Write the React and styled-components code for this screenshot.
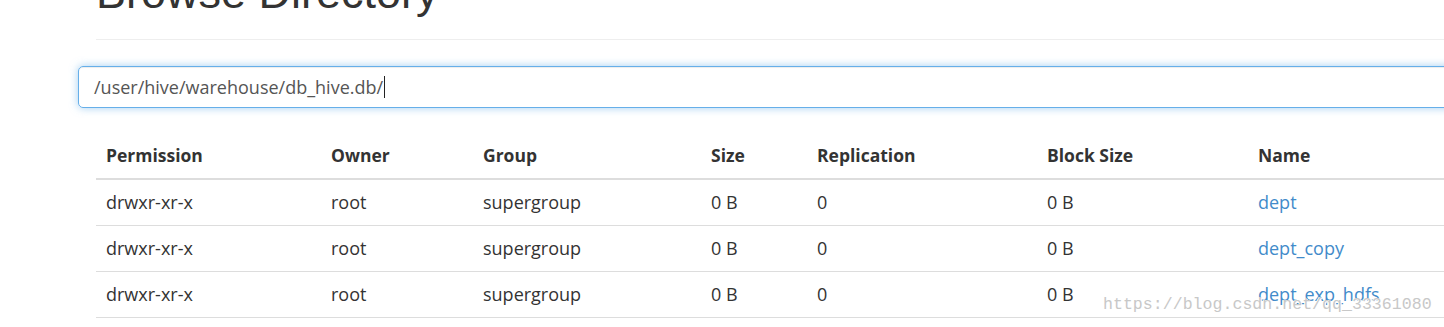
import React from 'react';
import styled, { createGlobalStyle } from 'styled-components';

const GlobalStyle = createGlobalStyle`
    html, body {
        margin: 0;
        padding: 0;
        background: #fff;
        overflow: hidden;
    }
    body {
        color: #333;
        font-family: "Open Sans", "Noto Sans", sans-serif;
    }
`

const Page = styled.div`
    position: relative;
    width: 1600px;
    height: 327px;
    padding-left: 78px;
    box-sizing: border-box;
`

const PageHeader = styled.div`
    margin-left: 18px;
    height: 39px;
    display: flex;
    align-items: flex-end;
    border-bottom: 1px solid #eee;
`

const Title = styled.h1`
    margin: 0;
    padding-bottom: 24px;
    font-family: "Liberation Sans", Arial, sans-serif;
    font-size: 45px;
    font-weight: 500;
    line-height: 45px;
    color: #333;
`

const PathBox = styled.div`
    margin-top: 26px;
    height: 42px;
    box-sizing: border-box;
    padding: 0 15px;
    display: flex;
    align-items: center;
    border: 1px solid #66afe9;
    border-radius: 5px;
    box-shadow: inset 0 1px 1px rgba(0,0,0,.075), 0 0 8px rgba(102,175,233,.6);
    font-size: 18px;
    color: #555;
`

const Caret = styled.span`
    display: inline-block;
    width: 1px;
    height: 22px;
    margin-left: 1px;
    background: #222;
`

const Table = styled.table`
    margin-left: 18px;
    margin-top: 25px;
    width: 1504px;
    border-collapse: collapse;
    table-layout: fixed;
    font-size: 18px;
    line-height: 25px;
`

const Th = styled.th`
    box-sizing: border-box;
    text-align: left;
    padding: 10px;
    font-size: 17.5px;
    font-weight: 700;
    border-bottom: 2px solid #ddd;
    width: ${p => p.$w ? p.$w + 'px' : 'auto'};
`

const Td = styled.td`
    padding: 10px;
    border-bottom: 1px solid #ddd;
    white-space: nowrap;
`

const Link = styled.a`
    color: #428bca;
    text-decoration: none;
`

const Watermark = styled.div`
    position: absolute;
    left: 1103px;
    top: 295px;
    font-family: "Liberation Mono", "DejaVu Sans Mono", monospace;
    font-size: 16.6px;
    line-height: 20px;
    color: #c8c8c8;
    text-shadow: 1px 1px 0 #fff, -1px 0 0 #fff;
    white-space: nowrap;
`

const columns = [
    { title: 'Permission', w: 225 },
    { title: 'Owner', w: 152 },
    { title: 'Group', w: 228 },
    { title: 'Size', w: 106 },
    { title: 'Replication', w: 230 },
    { title: 'Block Size', w: 211 },
    { title: 'Name' },
];

const files = ['dept', 'dept_copy', 'dept_exp_hdfs'];

export default function App() {
    return (
        <Page>
            <GlobalStyle />
            <PageHeader>
                <Title>Browse Directory</Title>
            </PageHeader>

            <PathBox>
                /user/hive/warehouse/db_hive.db/<Caret />
            </PathBox>

            <Table>
                <thead>
                    <tr>
                        {columns.map(c => <Th key={c.title} $w={c.w}>{c.title}</Th>)}
                    </tr>
                </thead>
                <tbody>
                    {files.map(name => (
                        <tr key={name}>
                            <Td>drwxr-xr-x</Td>
                            <Td>root</Td>
                            <Td>supergroup</Td>
                            <Td>0 B</Td>
                            <Td>0</Td>
                            <Td>0 B</Td>
                            <Td><Link href="#">{name}</Link></Td>
                        </tr>
                    ))}
                </tbody>
            </Table>

            <Watermark>https://blog.csdn.net/qq_33361080</Watermark>
        </Page>
    )
}
